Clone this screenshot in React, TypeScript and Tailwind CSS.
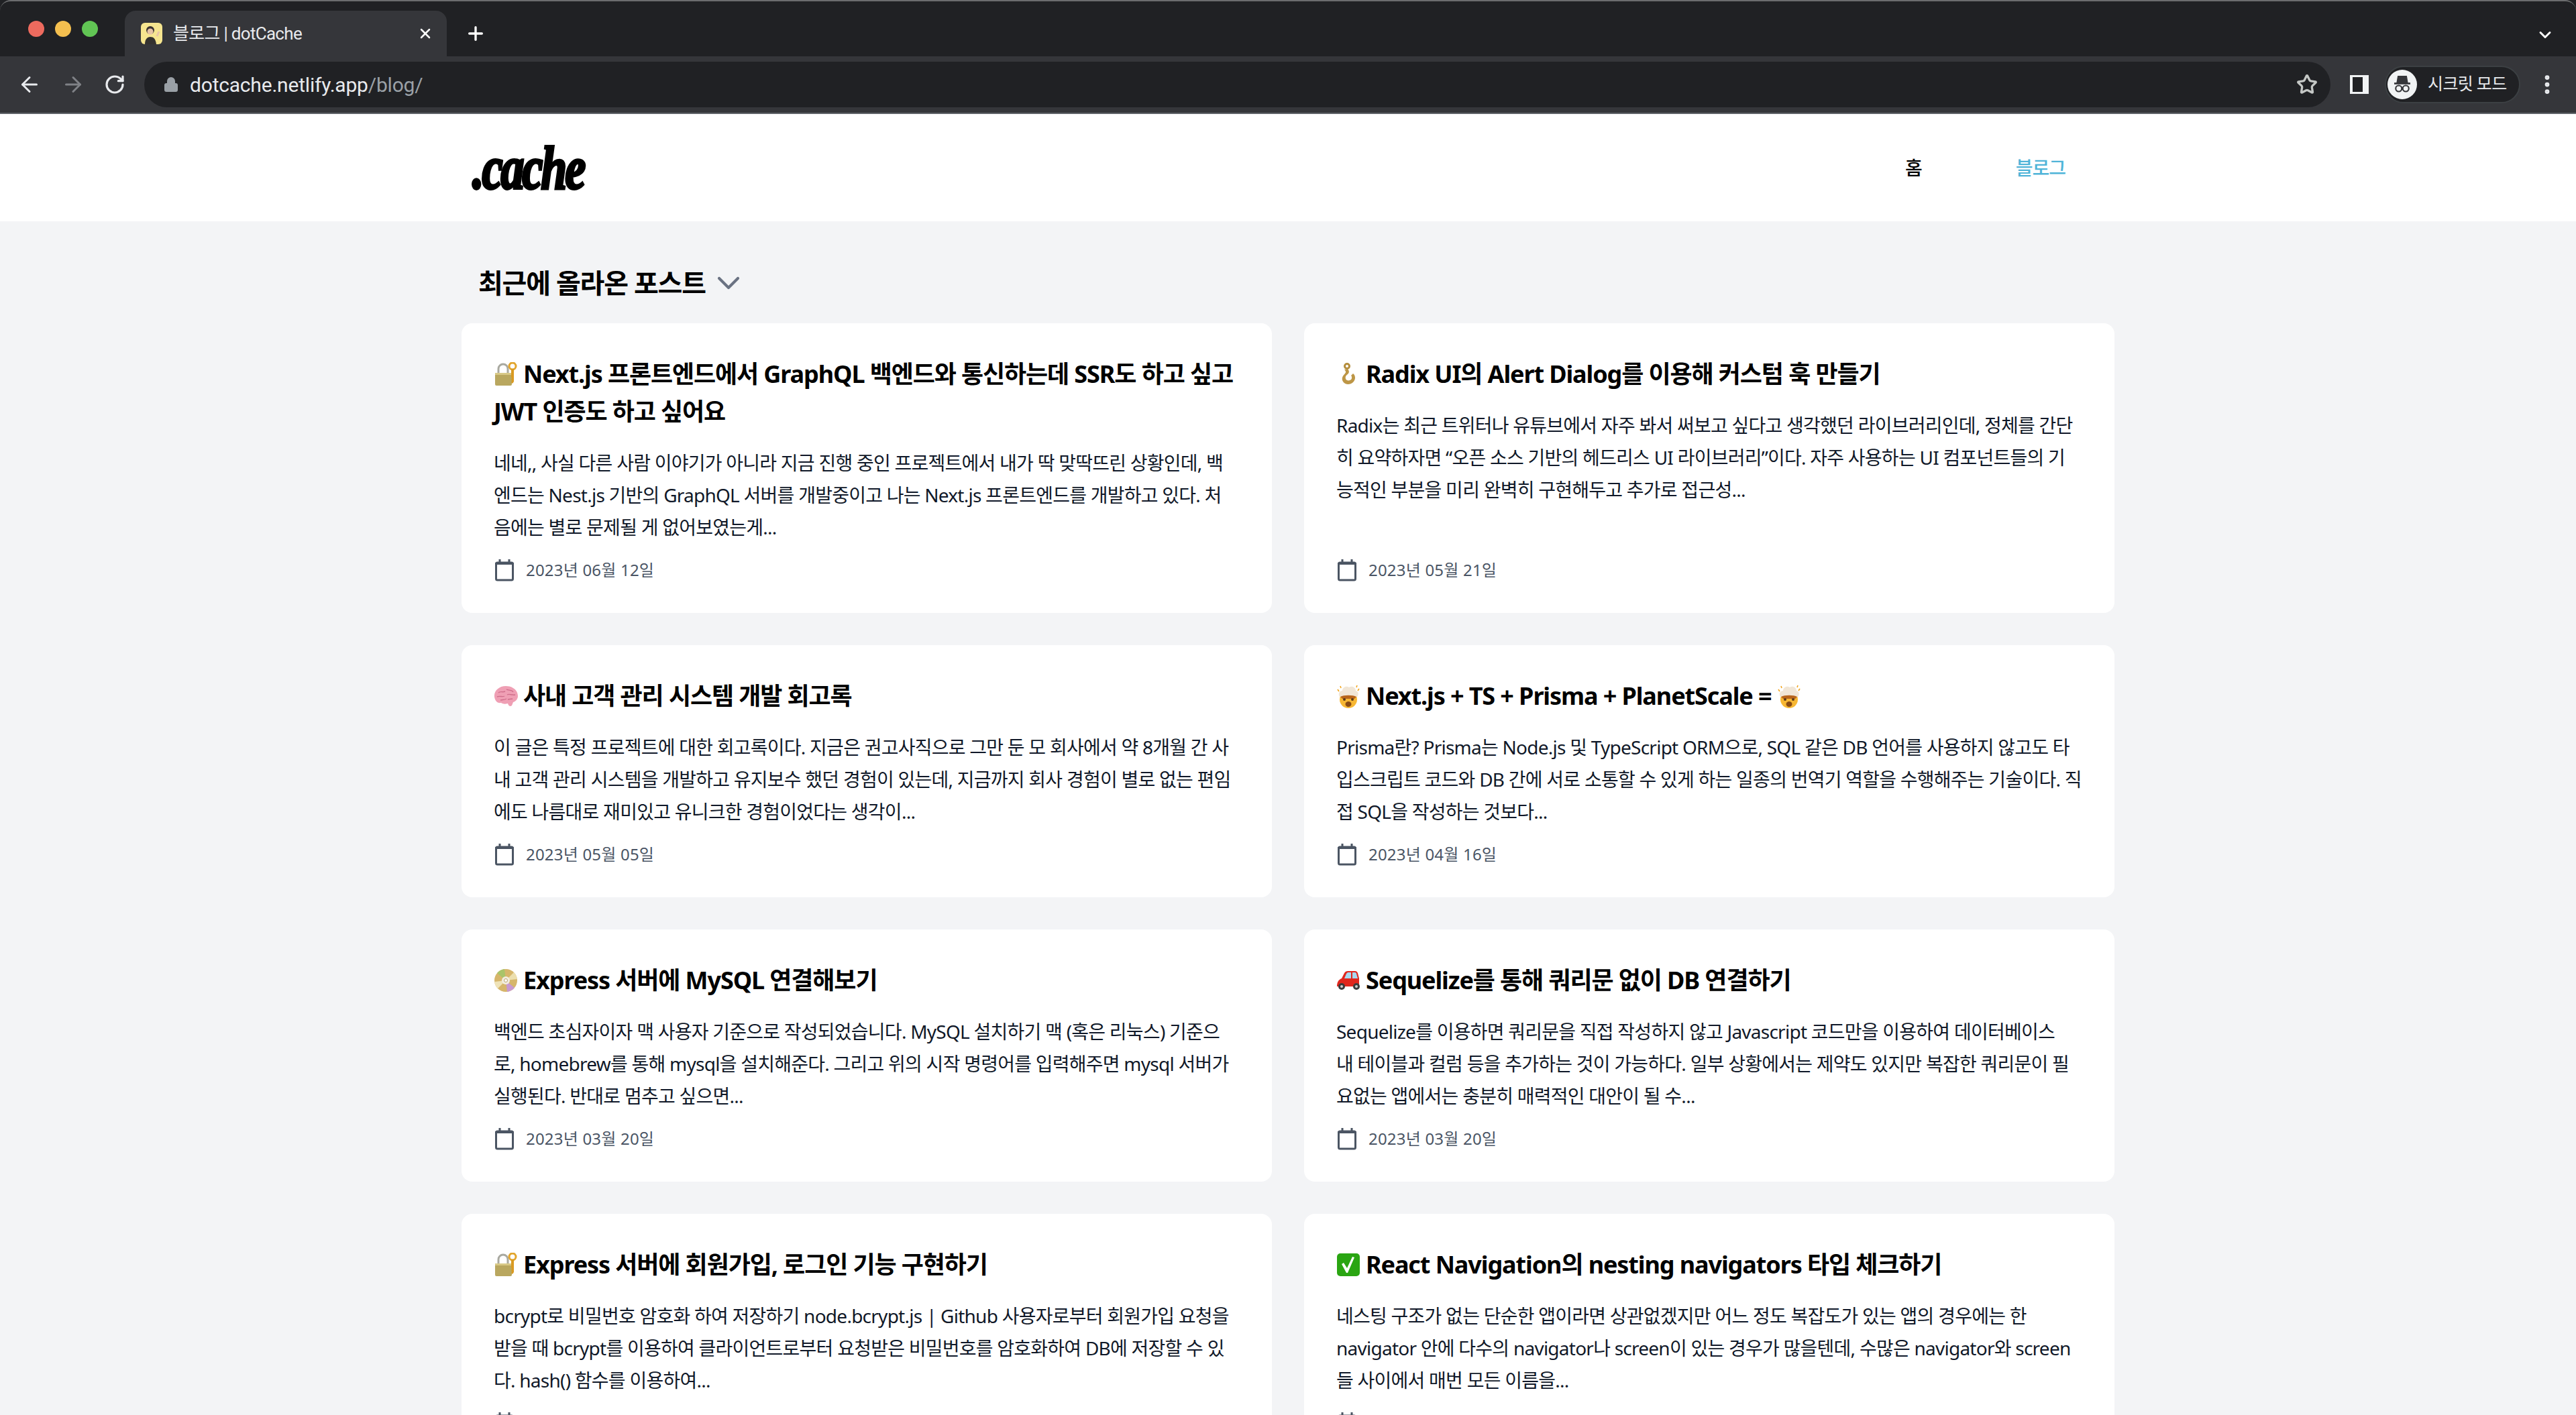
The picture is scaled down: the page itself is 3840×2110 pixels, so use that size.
import React from 'react';
import { ArrowLeft, ArrowRight, ChevronDown, EllipsisVertical, Lock, Plus, RotateCw, Star, X } from 'lucide-react';

const LockKey = () => (
  <svg viewBox="0 0 36 36" className="w-9 h-9 shrink-0">
    <path d="M7 17V10a7 7 0 0 1 14 0v7" fill="none" stroke="#a9a9a0" strokeWidth="3" />
    <rect x="2" y="16" width="25" height="19" rx="2" fill="#b9a75f" />
    <rect x="2" y="16" width="25" height="3" fill="#d8c987" />
    <circle cx="28" cy="6" r="5" fill="none" stroke="#e2a52c" strokeWidth="3" />
    <path d="M26 10h4v19l-2 3-2-2 1-2-1-2 1-2-1-2z" fill="#d99a22" />
  </svg>
);

const Hook = () => (
  <svg viewBox="0 0 36 36" className="w-9 h-9 shrink-0">
    <circle cx="16" cy="6" r="3.5" fill="none" stroke="#b48d3c" strokeWidth="3" />
    <path d="M17 10c2 3 3 5 0 8-3 2-4 4-3 7 1 3 6 3 8 1 2-2 1-5 0-6l3-3c4 3 4 9 0 13-4 4-12 4-15-1-3-5 0-9 3-12 2-2 1-4-1-6z" fill="#bd9646" />
  </svg>
);

const Brain = () => (
  <svg viewBox="0 0 36 36" className="w-9 h-9 shrink-0">
    <path d="M1 19C0 10 8 3 18 3c10 0 18 6 18 15 0 4-3 8-7 9l-2 5c-2 2-5 1-6-3-4 1-7 1-10-1-6 1-9-3-10-9z" fill="#ef9fb4" />
    <path d="M7 13c3-3 6 0 10-2M5 19c4-2 8 1 11-1M19 8c3 2 8 0 10 4M20 16c3-2 7 1 12 0M10 24c3-1 6 0 9-2M21 23c2-1 4 0 7-1" fill="none" stroke="#cf6e8b" strokeWidth="1.4" />
  </svg>
);

const MindBlown = () => (
  <svg viewBox="0 0 36 36" className="w-9 h-9 shrink-0">
    <circle cx="18" cy="23" r="13" fill="#f7b733" />
    <path d="M5 19c-3-5 0-9 4-9 0-5 6-8 10-5 4-3 10 0 10 5 4 1 5 6 2 9z" fill="#f1e6d6" />
    <path d="M6 19c5-3 19-3 24 0l-3 3H9z" fill="#b8651c" />
    <circle cx="12" cy="23" r="2" fill="#5a3a1a" />
    <circle cx="24" cy="23" r="2" fill="#5a3a1a" />
    <ellipse cx="18" cy="30" rx="4.5" ry="4" fill="#8a4b14" />
    <path d="M2 8l2 3M34 7l-2 3M6 3l1 3M31 2l-1 3" stroke="#f2a61f" strokeWidth="1.6" />
  </svg>
);

const Disc = () => (
  <svg viewBox="0 0 36 36" className="w-9 h-9 shrink-0">
    <circle cx="18" cy="18" r="17" fill="#d6b66b" />
    <path d="M18 18L5 7A17 17 0 0 1 16 1z" fill="#a9c46a" />
    <path d="M18 18L31 29A17 17 0 0 1 20 35z" fill="#c79ad0" />
    <path d="M18 18L30 6A17 17 0 0 1 35 16z" fill="#ecdfae" />
    <path d="M18 18L6 30A17 17 0 0 1 1 20z" fill="#efe3b8" />
    <circle cx="18" cy="18" r="6" fill="#f2ede0" />
    <circle cx="18" cy="18" r="2.5" fill="#ffffff" stroke="#b9a36a" strokeWidth="1" />
  </svg>
);

const Car = () => (
  <svg viewBox="0 0 36 36" className="w-9 h-9 shrink-0">
    <path d="M1 27c0-6 2-10 7-12l4-8c1-2 3-3 5-3h11c2 0 3 1 4 3l2 8v12z" fill="#e0261c" />
    <path d="M12 15l3-7c1-1 1-2 3-2h4v9zM24 6h4c1 0 2 1 2 2l2 7h-8z" fill="#a8d8ef" />
    <circle cx="8" cy="27" r="5" fill="#3b3b3b" />
    <circle cx="8" cy="27" r="2" fill="#cfcfcf" />
    <circle cx="30" cy="27" r="5" fill="#3b3b3b" />
    <circle cx="30" cy="27" r="2" fill="#cfcfcf" />
  </svg>
);

const Check = () => (
  <svg viewBox="0 0 36 36" className="w-9 h-9 shrink-0">
    <rect x="1" y="1" width="34" height="34" rx="5" fill="#2aa512" />
    <path d="M8 17l3-2 5 8 8-17 3 1-10 23h-2z" fill="#ffffff" />
  </svg>
);

const CalendarIcon = () => (
  <svg viewBox="0 0 32 34" className="w-8 h-[34px] shrink-0">
    <path d="M2 6h28v3H2z" fill="#4b5563" />
    <rect x="3.5" y="6" width="25" height="26" rx="2" fill="none" stroke="#4b5563" strokeWidth="3" />
    <path d="M9 1v7M23 1v7" stroke="#4b5563" strokeWidth="3" />
  </svg>
);

const posts = [
  {
    icon: [LockKey],
    title: ['Next.js 프론트엔드에서 GraphQL 백엔드와 통신하는데 SSR도 하고 싶고', 'JWT 인증도 하고 싶어요'],
    body: [
      '네네,, 사실 다른 사람 이야기가 아니라 지금 진행 중인 프로젝트에서 내가 딱 맞딱뜨린 상황인데, 백',
      '엔드는 Nest.js 기반의 GraphQL 서버를 개발중이고 나는 Next.js 프론트엔드를 개발하고 있다. 처',
      '음에는 별로 문제될 게 없어보였는게...',
    ],
    date: '2023년 06월 12일',
  },
  {
    icon: [Hook],
    title: ['Radix UI의 Alert Dialog를 이용해 커스텀 훅 만들기'],
    body: [
      'Radix는 최근 트위터나 유튜브에서 자주 봐서 써보고 싶다고 생각했던 라이브러리인데, 정체를 간단',
      '히 요약하자면 “오픈 소스 기반의 헤드리스 UI 라이브러리”이다. 자주 사용하는 UI 컴포넌트들의 기',
      '능적인 부분을 미리 완벽히 구현해두고 추가로 접근성...',
    ],
    date: '2023년 05월 21일',
  },
  {
    icon: [Brain],
    title: ['사내 고객 관리 시스템 개발 회고록'],
    body: [
      '이 글은 특정 프로젝트에 대한 회고록이다. 지금은 권고사직으로 그만 둔 모 회사에서 약 8개월 간 사',
      '내 고객 관리 시스템을 개발하고 유지보수 했던 경험이 있는데, 지금까지 회사 경험이 별로 없는 편임',
      '에도 나름대로 재미있고 유니크한 경험이었다는 생각이...',
    ],
    date: '2023년 05월 05일',
  },
  {
    icon: [MindBlown, MindBlown],
    title: ['Next.js + TS + Prisma + PlanetScale ='],
    body: [
      'Prisma란? Prisma는 Node.js 및 TypeScript ORM으로, SQL 같은 DB 언어를 사용하지 않고도 타',
      '입스크립트 코드와 DB 간에 서로 소통할 수 있게 하는 일종의 번역기 역할을 수행해주는 기술이다. 직',
      '접 SQL을 작성하는 것보다...',
    ],
    date: '2023년 04월 16일',
  },
  {
    icon: [Disc],
    title: ['Express 서버에 MySQL 연결해보기'],
    body: [
      '백엔드 초심자이자 맥 사용자 기준으로 작성되었습니다. MySQL 설치하기 맥 (혹은 리눅스) 기준으',
      '로, homebrew를 통해 mysql을 설치해준다. 그리고 위의 시작 명령어를 입력해주면 mysql 서버가',
      '실행된다. 반대로 멈추고 싶으면...',
    ],
    date: '2023년 03월 20일',
  },
  {
    icon: [Car],
    title: ['Sequelize를 통해 쿼리문 없이 DB 연결하기'],
    body: [
      'Sequelize를 이용하면 쿼리문을 직접 작성하지 않고 Javascript 코드만을 이용하여 데이터베이스',
      '내 테이블과 컬럼 등을 추가하는 것이 가능하다. 일부 상황에서는 제약도 있지만 복잡한 쿼리문이 필',
      '요없는 앱에서는 충분히 매력적인 대안이 될 수...',
    ],
    date: '2023년 03월 20일',
  },
  {
    icon: [LockKey],
    title: ['Express 서버에 회원가입, 로그인 기능 구현하기'],
    body: [
      'bcrypt로 비밀번호 암호화 하여 저장하기 node.bcrypt.js | Github 사용자로부터 회원가입 요청을',
      '받을 때 bcrypt를 이용하여 클라이언트로부터 요청받은 비밀번호를 암호화하여 DB에 저장할 수 있',
      '다. hash() 함수를 이용하여...',
    ],
    date: '2023년 02월 20일',
  },
  {
    icon: [Check],
    title: ['React Navigation의 nesting navigators 타입 체크하기'],
    body: [
      '네스팅 구조가 없는 단순한 앱이라면 상관없겠지만 어느 정도 복잡도가 있는 앱의 경우에는 한',
      'navigator 안에 다수의 navigator나 screen이 있는 경우가 많을텐데, 수많은 navigator와 screen',
      '들 사이에서 매번 모든 이름을...',
    ],
    date: '2023년 02월 11일',
  },
];

type Post = (typeof posts)[number];

const PostCard = ({ post }: { post: Post }) => {
  const [Icon, TrailingIcon] = post.icon;
  return (
    <article className="flex flex-col bg-white rounded-2xl px-12 pt-12 pb-11">
      <h3 className="text-[36px] leading-[56px] font-bold text-black whitespace-nowrap tracking-[-1.1px]">
        {post.title.map((line, i) => (
          <div key={line} className="flex items-center gap-2">
            {i === 0 && <Icon />}
            <span>{line}</span>
            {i === 0 && TrailingIcon && <TrailingIcon />}
          </div>
        ))}
      </h3>
      <div className="mt-6 text-[28px] leading-[48px] text-gray-900 whitespace-nowrap tracking-[-0.75px]">
        {post.body.map((line) => (
          <p key={line}>{line}</p>
        ))}
      </div>
      <div className="mt-auto pt-5 flex items-center gap-4 h-[60px] text-[24px] text-gray-600 tracking-[0.2px]">
        <CalendarIcon />
        <span>{post.date}</span>
      </div>
    </article>
  );
};

const BrowserChrome = () => (
  <div className="bg-[#202124] text-white font-['Roboto','Noto_Sans_CJK_KR',sans-serif]">
    {/* tab strip */}
    <div className="h-[84px] flex items-end border-t-2 border-[#6b6c6e] rounded-t-2xl">
      <div className="flex items-center gap-4 w-[186px] h-full pl-[42px]">
        <span className="w-6 h-6 rounded-full bg-[#ed6a5e]" />
        <span className="w-6 h-6 rounded-full bg-[#f4bf4f]" />
        <span className="w-6 h-6 rounded-full bg-[#61c554]" />
      </div>
      <div className="w-[480px] h-[68px] bg-[#35363a] rounded-t-2xl flex items-center pl-6 pr-5">
        <svg viewBox="0 0 32 32" className="w-8 h-8 shrink-0">
          <rect width="32" height="32" rx="6" fill="#f6e58f" />
          <circle cx="14" cy="11" r="6" fill="#3a3330" />
          <circle cx="14" cy="13" r="4.5" fill="#e8c4a6" />
          <path d="M6 32c0-7 3-11 8-11s8 3 9 11z" fill="#34322f" />
          <path d="M24 20l3-7" stroke="#e8c4a6" strokeWidth="3" />
        </svg>
        <span className="ml-4 text-[26px] tracking-[-0.7px] text-[#e8eaed]">블로그 | dotCache</span>
        <X className="ml-auto w-6 h-6 text-white" strokeWidth={2.5} />
      </div>
      <Plus className="ml-[27px] mb-[18px] w-8 h-8 text-white" strokeWidth={2.5} />
      <ChevronDown className="ml-auto mr-8 mb-[18px] w-7 h-7 text-white" strokeWidth={2.5} />
    </div>
    {/* toolbar */}
    <div className="h-[86px] bg-[#35363a] border-b-2 border-[#5f6368] flex items-center pl-[26px] pr-[25px]">
      <ArrowLeft className="w-9 h-9 text-[#e8eaed]" strokeWidth={2} />
      <ArrowRight className="ml-[29px] w-9 h-9 text-[#7f8186]" strokeWidth={2} />
      <RotateCw className="ml-[28px] w-8 h-8 text-[#e8eaed]" strokeWidth={2.4} />
      <div className="ml-[28px] w-[3259px] h-[68px] rounded-full bg-[#202124] flex items-center pl-7 pr-[19px]">
        <Lock className="w-6 h-6 text-[#9aa0a6]" fill="#9aa0a6" />
        <span className="ml-4 text-[30px] tracking-[-0.2px] text-[#e8eaed]">
          dotcache.netlify.app<span className="text-[#9aa0a6]">/blog/</span>
        </span>
        <Star className="ml-auto w-8 h-8 text-[#c4c7c5]" strokeWidth={2.5} />
      </div>
      <div className="ml-[29px] w-7 h-7 border-y-[3px] border-l-4 border-r-[9px] border-[#f1f3f4] bg-[#202124]" />
      <div className="ml-6 h-[56px] w-[202px] rounded-full bg-[#202124] border-2 border-[#3c4043] flex items-center pl-[2px]">
        <div className="w-[44px] h-[44px] rounded-full bg-[#f1f3f4] flex items-center justify-center">
          <svg viewBox="0 0 24 24" className="w-9 h-9" fill="none" stroke="#35363a" strokeWidth="1.4">
            <path d="M8 4h8l1 6H7z" fill="#35363a" />
            <path d="M4 11h16" strokeWidth="1.8" />
            <circle cx="8.5" cy="16" r="3" />
            <circle cx="15.5" cy="16" r="3" />
            <path d="M11.5 16h1" />
          </svg>
        </div>
        <span className="ml-4 text-[25px] tracking-[-0.6px] text-[#e8eaed]">시크릿 모드</span>
      </div>
      <EllipsisVertical className="ml-auto w-9 h-9 text-[#e8eaed]" strokeWidth={2.5} />
    </div>
  </div>
);

export default function App() {
  return (
    <div className="h-[2110px] overflow-hidden bg-[#f3f4f6] font-['Noto_Sans','Noto_Sans_CJK_KR',sans-serif]">
      <BrowserChrome />
      <header className="h-[160px] bg-white">
        <div className="w-[2432px] mx-auto h-full flex items-center">
          <span className="origin-left scale-x-[0.76] font-['Liberation_Serif',serif] italic font-bold text-[92px] leading-none tracking-[-4px] text-black [-webkit-text-stroke:4px_black]">
            .cache
          </span>
          <nav className="ml-auto mr-[57px] flex items-center gap-[140px] text-[28px] tracking-[-1px] font-medium">
            <a className="text-black">홈</a>
            <a className="text-[#4fb4d8]">블로그</a>
          </nav>
        </div>
      </header>
      <main className="w-[2464px] mx-auto">
        <div className="h-[152px] pt-8 pl-[25px] flex items-center gap-[6px]">
          <h2 className="text-[40px] font-bold text-black tracking-[-1.2px]">최근에 올라온 포스트</h2>
          <ChevronDown className="w-14 h-14 text-gray-500" strokeWidth={1.8} />
        </div>
        <div className="grid grid-cols-2 gap-12">
          {posts.map((post) => (
            <PostCard key={post.title[0]} post={post} />
          ))}
        </div>
      </main>
    </div>
  );
}
